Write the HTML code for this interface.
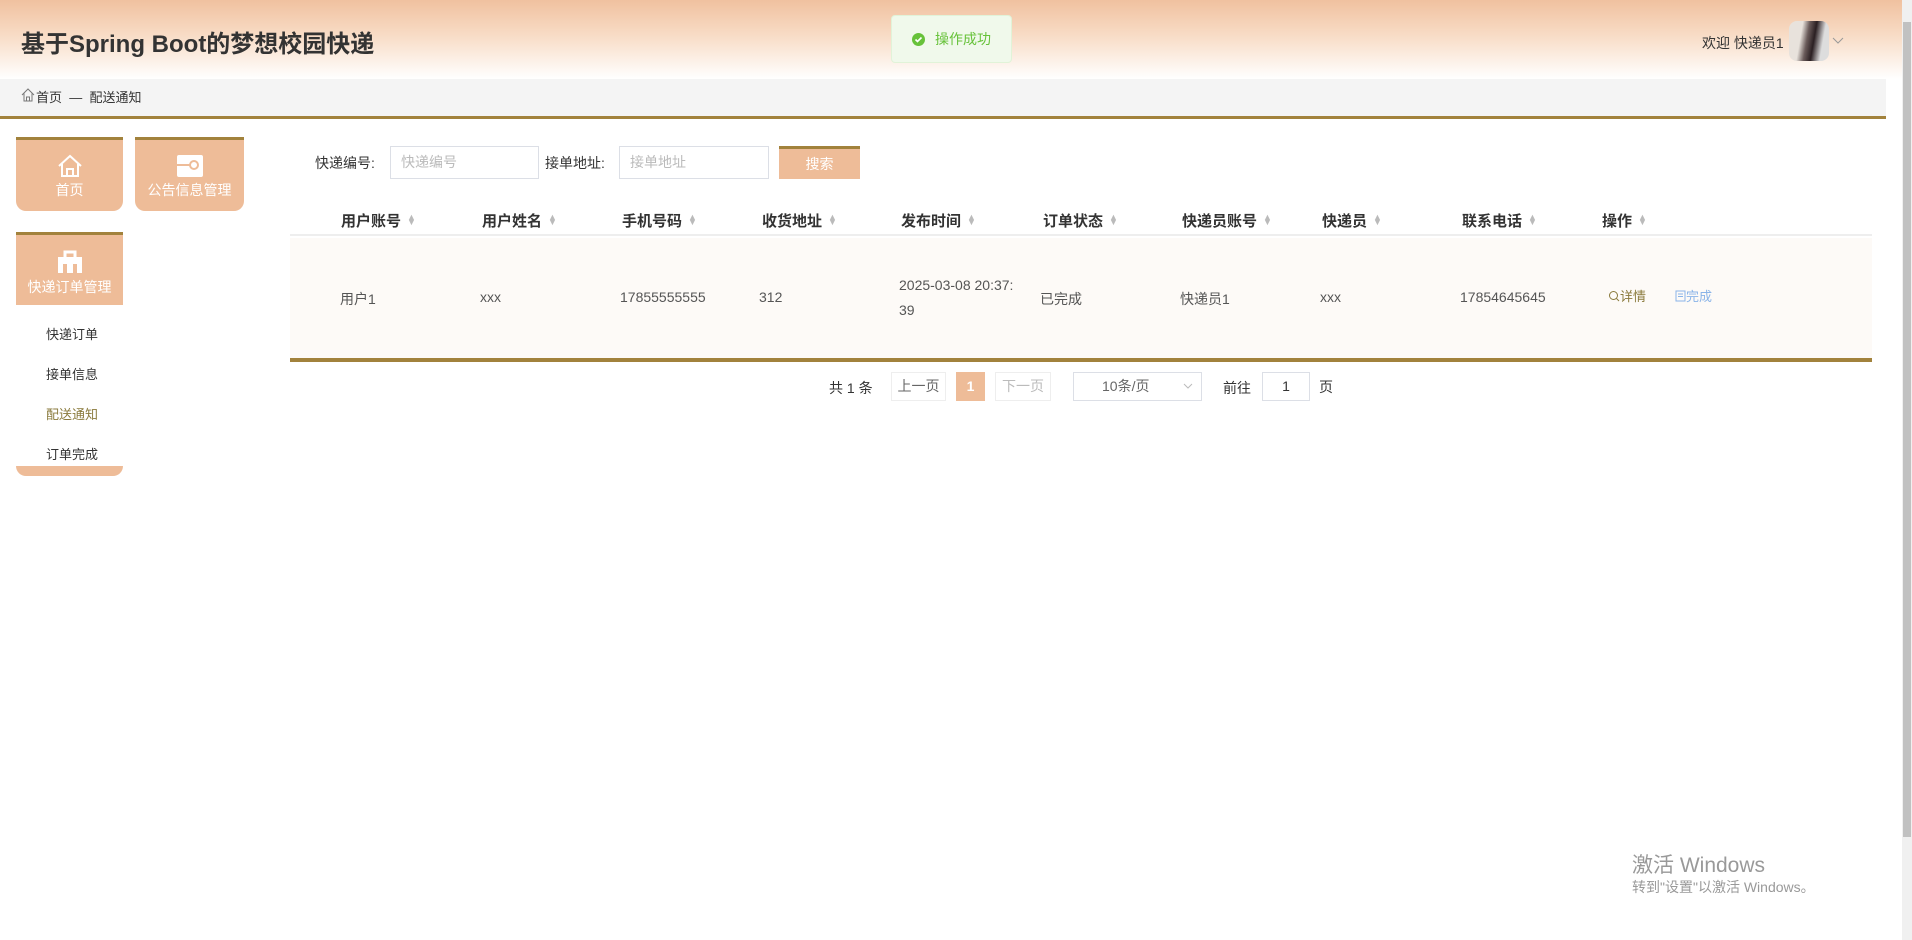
<!DOCTYPE html>
<html><head><meta charset="utf-8"><style>
*{margin:0;padding:0;box-sizing:border-box}
body{width:1912px;height:940px;overflow:hidden;background:#fff;font-family:"Liberation Sans","Noto Sans CJK SC",sans-serif;color:#333;position:relative;font-size:14px}
.abs{position:absolute}
.header{left:0;top:0;width:1912px;height:79px;background:linear-gradient(#f0c19f,#f8dcc6 45%,#fff)}
.title{left:21px;top:24px;font-size:24px;font-weight:bold;color:#333}
.toast{left:891px;top:15px;width:121px;height:48px;background:#f0f9eb;border:1px solid #e1f3d8;border-radius:4px;color:#67c23a;font-size:14px;line-height:46px;padding-left:20px}
.toast i{display:inline-block;width:13px;height:13px;border-radius:50%;background:#67c23a;vertical-align:-2px;margin-right:10px;position:relative}
.bc{left:0;top:79px;width:1886px;height:40px;background:#f4f4f4;border-bottom:3px solid #a2823c}
.tile{background:#eebc98;border-top:3px solid #a2823c;color:#fff;text-align:center;font-size:14px}
.sub{left:46px;font-size:13px;color:#333}
.lbl{top:153px;font-size:14px;color:#333}
.inp{top:146px;height:33px;border:1px solid #dcdfe6;background:#fff;color:#bbb;font-size:14px;line-height:31px;padding-left:10px}
.th{top:210px;font-size:15px;font-weight:bold;color:#333}
.arr{display:inline-block;margin-left:6px;font-size:9px;color:#bbb;line-height:5px;vertical-align:1px}
.td{top:287px;font-size:14px;color:#555}
.pg{top:372px;height:29px;border:1px solid #eee;background:#fff;font-size:14px;color:#666;text-align:center;line-height:27px}
.scroll{left:1902px;top:0;width:10px;height:940px;background:#f0f0f0}
</style></head><body>
<div class="abs header"></div>
<div class="abs title">基于Spring Boot的梦想校园快递</div>
<div class="abs toast"><i><svg width="13" height="13" style="position:absolute;left:0;top:0"><path d="M3.5 6.5l2 2 4-4" stroke="#fff" stroke-width="1.6" fill="none"/></svg></i>操作成功</div>
<div class="abs" style="left:1702px;top:33px;font-size:14px;color:#333">欢迎 快递员1</div>
<div class="abs" style="left:1789px;top:21px;width:40px;height:40px;border-radius:8px;background:linear-gradient(100deg,#e8e2dc 30%,#6a5b5a 45%,#2a1f22 60%,#ddd 80%)"></div>
<svg class="abs" style="left:1832px;top:37px" width="12" height="8"><path d="M1 1l5 5 5-5" stroke="#999" fill="none"/></svg>
<div class="abs scroll"><div style="position:absolute;left:1px;top:22px;width:8px;height:815px;background:#c1c1c1"></div></div>
<div class="abs bc"></div>
<svg class="abs" style="left:21px;top:88px" width="14" height="14"><path d="M1 7L7 1l6 6M3 5.5V13h8V5.5M5.5 13V9h3v4" stroke="#777" fill="none"/></svg>
<div class="abs" style="left:36px;top:87px;font-size:13px;color:#333">首页 &nbsp;—&nbsp; 配送通知</div>

<div class="abs tile" style="left:16px;top:137px;width:107px;height:74px;border-radius:0 0 10px 10px">
<svg style="margin-top:14px" width="26" height="24"><path d="M2 12L13 2l11 10M5 10v12h16V10M10 22v-7h6v7" stroke="#fff" stroke-width="2" fill="none"/></svg>
<div style="line-height:18px">首页</div></div>
<div class="abs tile" style="left:135px;top:137px;width:109px;height:74px;border-radius:0 0 10px 10px">
<svg style="margin-top:14px" width="28" height="24"><rect x="1" y="1" width="26" height="22" rx="2" fill="#fff"/><path d="M1 11h14" stroke="#eebc98" stroke-width="2"/><circle cx="18" cy="11" r="4" fill="#fff" stroke="#eebc98" stroke-width="2"/></svg>
<div style="line-height:18px">公告信息管理</div></div>
<div class="abs tile" style="left:16px;top:232px;width:107px;height:73px">
<svg style="margin-top:15px" width="26" height="24"><rect x="1" y="7" width="24" height="16" fill="#fff"/><path d="M8 7V2h10v5" stroke="#fff" stroke-width="3" fill="none"/><rect x="6" y="14" width="4" height="9" fill="#eebc98"/><rect x="16" y="14" width="4" height="9" fill="#eebc98"/></svg>
<div style="line-height:20px">快递订单管理</div></div>
<div class="abs sub" style="top:324px">快递订单</div>
<div class="abs sub" style="top:364px">接单信息</div>
<div class="abs sub" style="top:404px;color:#8a7a3c">配送通知</div>
<div class="abs sub" style="top:444px">订单完成</div>
<div class="abs" style="left:16px;top:466px;width:107px;height:10px;background:#eebc98;border-radius:0 0 10px 10px"></div>

<div class="abs lbl" style="left:315px">快递编号:</div>
<div class="abs inp" style="left:390px;width:149px">快递编号</div>
<div class="abs lbl" style="left:545px">接单地址:</div>
<div class="abs inp" style="left:619px;width:150px">接单地址</div>
<div class="abs" style="left:779px;top:146px;width:81px;height:33px;background:#eebc98;border-top:3px solid #a2823c;color:#fff;text-align:center;line-height:30px;font-size:14px">搜索</div>

<div class="abs" style="left:290px;top:201px;width:1582px;height:35px;background:#fff;border-bottom:2px solid #eee"></div>
<div class="abs" style="left:290px;top:238px;width:1582px;height:124px;background:#fdfaf7;border-bottom:4px solid #a2823c"></div>
<div class="abs th" style="left:341px">用户账号<span class="arr">▲<br>▼</span></div>
<div class="abs th" style="left:482px">用户姓名<span class="arr">▲<br>▼</span></div>
<div class="abs th" style="left:622px">手机号码<span class="arr">▲<br>▼</span></div>
<div class="abs th" style="left:762px">收货地址<span class="arr">▲<br>▼</span></div>
<div class="abs th" style="left:901px">发布时间<span class="arr">▲<br>▼</span></div>
<div class="abs th" style="left:1043px">订单状态<span class="arr">▲<br>▼</span></div>
<div class="abs th" style="left:1182px">快递员账号<span class="arr">▲<br>▼</span></div>
<div class="abs th" style="left:1322px">快递员<span class="arr">▲<br>▼</span></div>
<div class="abs th" style="left:1462px">联系电话<span class="arr">▲<br>▼</span></div>
<div class="abs th" style="left:1602px">操作<span class="arr">▲<br>▼</span></div>
<div class="abs td" style="left:340px;top:289px">用户1</div>
<div class="abs td" style="left:480px;top:289px">xxx</div>
<div class="abs td" style="left:620px;top:289px">17855555555</div>
<div class="abs td" style="left:759px;top:289px">312</div>
<div class="abs td" style="left:899px;top:273px;line-height:25px">2025-03-08 20:37:<br>39</div>
<div class="abs td" style="left:1040px;top:289px">已完成</div>
<div class="abs td" style="left:1180px;top:289px">快递员1</div>
<div class="abs td" style="left:1320px;top:289px">xxx</div>
<div class="abs td" style="left:1460px;top:289px">17854645645</div>
<div class="abs td" style="left:1608px;top:286px;color:#8a7a3c;font-size:13px"><svg width="12" height="12" style="vertical-align:-1px"><circle cx="5.5" cy="5.5" r="4" stroke="#8a7a3c" fill="none"/><path d="M8.5 8.5l2.5 2.5" stroke="#8a7a3c"/></svg>详情</div>
<div class="abs td" style="left:1675px;top:286px;color:#8ab4e8;font-size:13px"><svg width="11" height="12" style="vertical-align:-1px"><rect x="1" y="1" width="9" height="10" stroke="#8ab4e8" fill="none"/><path d="M3 4h5M3 6.5h5" stroke="#8ab4e8"/></svg>完成</div>

<div class="abs" style="left:829px;top:378px;font-size:14px;color:#333">共 1 条</div>
<div class="abs pg" style="left:891px;width:55px">上一页</div>
<div class="abs pg" style="left:956px;width:29px;background:#eebc98;border-color:#eebc98;color:#fff;font-weight:bold">1</div>
<div class="abs pg" style="left:995px;width:56px;color:#bbb">下一页</div>
<div class="abs pg" style="left:1073px;width:129px;text-align:left;padding-left:28px;border-color:#dcdfe6">10条/页<svg style="position:absolute;right:8px;top:10px" width="10" height="7"><path d="M1 1l4 4 4-4" stroke="#bbb" fill="none"/></svg></div>
<div class="abs" style="left:1223px;top:378px;font-size:14px;color:#333">前往</div>
<div class="abs pg" style="left:1262px;width:48px;border-color:#dcdfe6;color:#333">1</div>
<div class="abs" style="left:1319px;top:377px;font-size:14px;color:#333">页</div>

<div class="abs" style="left:1632px;top:849px;font-size:21px;color:#999">激活 Windows</div>
<div class="abs" style="left:1632px;top:877px;font-size:14px;color:#999">转到"设置"以激活 Windows。</div>
</body></html>
